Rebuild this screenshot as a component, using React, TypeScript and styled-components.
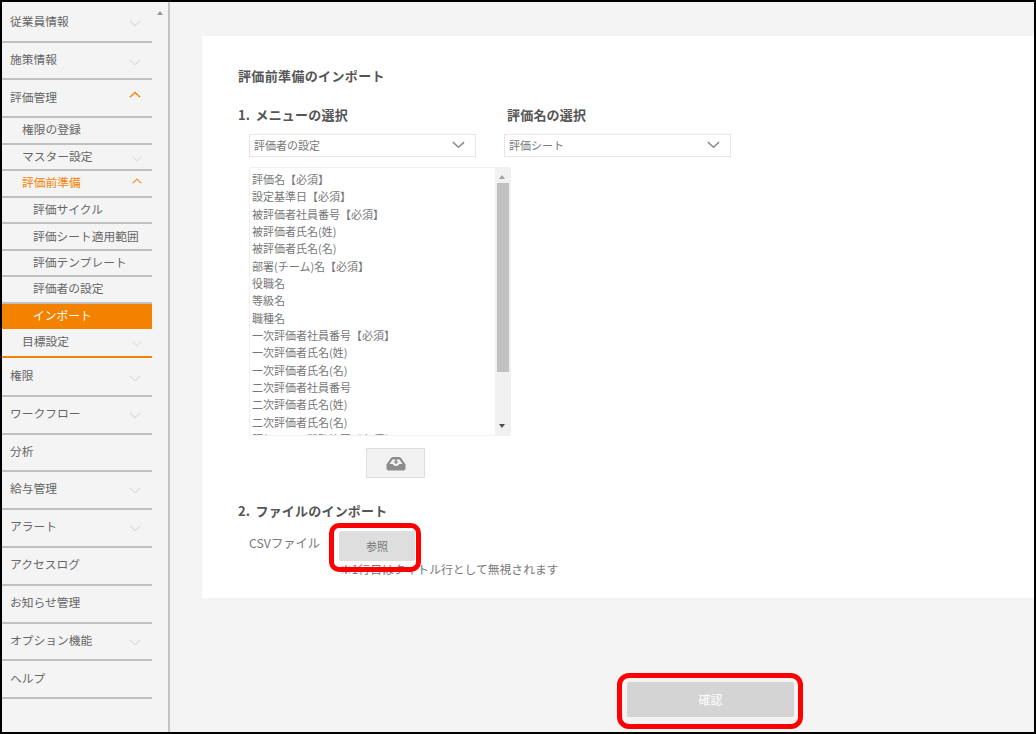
import React from 'react';
import styled, { createGlobalStyle } from 'styled-components';

const GlobalStyle = createGlobalStyle`
  html, body {
    margin: 0;
    padding: 0;
    background: #f4f4f4;
  }
  * {
    box-sizing: border-box;
  }
`;

const Frame = styled.div`
  position: relative;
  width: 1036px;
  height: 734px;
  overflow: hidden;
  display: flex;
  background: #f4f4f4;
  border: 2px solid #000;
  font-family: "Noto Sans CJK JP", "Noto Sans", sans-serif;
  font-size: 11.75px;
  color: #666;
`;

const Sidebar = styled.nav`
  position: relative;
  flex: none;
  width: 168px;
  height: 100%;
  border-right: 2px solid #c4c4c4;
`;

const Menu = styled.ul`
  list-style: none;
  margin: 0;
  padding: 0;
  width: 150px;
`;

const Row = styled.li<{ $h: number; $indent: number; $pb: number; $active?: boolean; $open?: boolean; $line?: string }>`
  height: ${({ $h }) => $h}px;
  display: flex;
  align-items: center;
  justify-content: space-between;
  padding: 0 ${({ $indent }) => ($indent > 9 ? 10 : 11)}px ${({ $pb }) => $pb}px ${({ $indent }) => $indent}px;
  border-bottom: 2px solid ${({ $line }) => $line || '#c0c0c0'};
  background: ${({ $active }) => ($active ? '#f38200' : 'transparent')};
  color: ${({ $active, $open }) => ($active ? '#fff' : $open ? '#f38200' : '#666')};
  white-space: nowrap;
`;

const ScrollUp = styled.span`
  position: absolute;
  top: 9px;
  left: 155px;
  width: 0;
  height: 0;
  border-left: 3px solid transparent;
  border-right: 3px solid transparent;
  border-bottom: 4px solid #999;
`;

const Main = styled.main`
  flex: 1;
  min-width: 0;
  padding-top: 34px;
  padding-left: 32px;
`;

const Card = styled.section`
  background: #fff;
  height: 562px;
  padding: 31px 0 0 36px;
`;

const Title = styled.h1`
  margin: 0 0 21px;
  font-size: 13px;
  line-height: 18px;
  font-weight: 700;
  color: #555;
  letter-spacing: 0.35px;
`;

const SelectRow = styled.div`
  display: flex;
`;

const Column = styled.div<{ $w: number }>`
  width: ${({ $w }) => $w}px;
`;

const StepTitle = styled.h2`
  margin: 0;
  font-size: 13px;
  line-height: 18px;
  font-weight: 700;
  color: #555;
  letter-spacing: 0.2px;
  word-spacing: 2px;
`;

const Select = styled.div<{ $ml: number }>`
  margin: 10px 0 0 ${({ $ml }) => $ml}px;
  width: 227px;
  height: 23px;
  display: flex;
  align-items: center;
  justify-content: space-between;
  padding: 0 10px 2px 4px;
  background: #fff;
  border: 1px solid #e6e6e6;
  font-size: 11px;
  color: #777;
`;

const ListBox = styled.div`
  position: relative;
  margin: 10px 0 0 11px;
  width: 262px;
  height: 269px;
  padding: 3px 0 0 2px;
  overflow: hidden;
  background: #fff;
  border: 1px solid #f0f0f0;
  border-radius: 2px;
`;

const ListItem = styled.div`
  height: 17.35px;
  line-height: 17.35px;
  font-size: 11px;
  color: #777;
  white-space: nowrap;
`;

const ScrollTrack = styled.div`
  position: absolute;
  top: 0;
  right: 0;
  bottom: 0;
  width: 15px;
  background: #f1f1f1;
`;

const ScrollThumb = styled.div`
  position: absolute;
  top: 15px;
  left: 2px;
  right: 1px;
  height: 189px;
  background: #c1c1c1;
`;

const ArrowUp = styled.span`
  position: absolute;
  top: 7px;
  left: 4px;
  border-left: 3.5px solid transparent;
  border-right: 3.5px solid transparent;
  border-bottom: 4px solid #a3a3a3;
`;

const ArrowDown = styled.span`
  position: absolute;
  bottom: 7px;
  left: 4px;
  border-left: 3.5px solid transparent;
  border-right: 3.5px solid transparent;
  border-top: 4px solid #505050;
`;

const DownloadButton = styled.button`
  display: flex;
  align-items: center;
  justify-content: center;
  margin: 12px 0 0 128px;
  width: 59px;
  height: 30px;
  padding: 0;
  background: #f2f2f2;
  border: 1px solid #dedede;
`;

const ImportTitle = styled(StepTitle)`
  margin-top: 24px;
`;

const FileRow = styled.div`
  display: flex;
  align-items: center;
  margin: 11px 0 0 11px;
`;

const FileLabel = styled.span`
  width: 90px;
  padding-bottom: 6px;
  font-size: 12.3px;
  color: #777;
`;

const BrowseButton = styled.button`
  width: 76px;
  height: 30px;
  padding: 0;
  background: #dedede;
  border: none;
  border-radius: 2px;
  font: inherit;
  font-size: 11px;
  color: #777;
`;

const Note = styled.p`
  margin: 1px 0 0 102px;
  font-size: 11.8px;
  line-height: 14px;
  color: #777;
`;

const Submit = styled.button`
  position: absolute;
  left: 625px;
  top: 680px;
  width: 167px;
  height: 35px;
  padding: 0;
  background: #d4d4d4;
  border: none;
  border-radius: 2px;
  font: inherit;
  font-size: 12px;
  font-weight: 500;
  color: #f8f8f8;
`;

const Highlight = styled.div<{ $x: number; $y: number; $w: number; $h: number; $r: number }>`
  position: absolute;
  left: ${({ $x }) => $x}px;
  top: ${({ $y }) => $y}px;
  width: ${({ $w }) => $w}px;
  height: ${({ $h }) => $h}px;
  border: 5px solid #ff0000;
  border-radius: ${({ $r }) => $r}px;
`;

const ChevronSvg = styled.svg<{ $offset: number }>`
  flex: none;
  margin-top: ${({ $offset }) => $offset}px;
`;

const Chevron = ({ up, color, size = 12, offset = 0 }: { up?: boolean; color: string; size?: number; offset?: number }) => (
  <ChevronSvg $offset={offset} width={size} height={size * 0.6} viewBox="0 0 14 8" fill="none">
    <path d={up ? 'M1 7 L7 1.5 L13 7' : 'M1 1 L7 6.5 L13 1'} stroke={color} strokeWidth="1.5" />
  </ChevronSvg>
);

const InboxIcon = () => (
  <svg width="20" height="15" viewBox="0 0 20 15">
    <path
      fill="#8c8c8c"
      d="M0.5 8.5 L4.5 2.5 Q5.5 1 7 1 H13 Q14.5 1 15.5 2.5 L19.5 8.5 V12.5 Q19.5 14.5 17.5 14.5 H2.5 Q0.5 14.5 0.5 12.5 Z"
    />
    <path fill="#f2f2f2" d="M3.5 8 L6.5 3.5 H13.5 L16.5 8 H13.2 Q12.7 10 10 10 Q7.3 10 6.8 8 Z" />
    <path fill="#8c8c8c" d="M9.2 3 H10.8 V5.5 H12.5 L10 8.3 L7.5 5.5 H9.2 Z" />
  </svg>
);

type Item = {
  label: string;
  h: number;
  indent: number;
  pb: number;
  chevron?: 'up' | 'down';
  active?: boolean;
  open?: boolean;
  line?: string;
};

const menu: Item[] = [
  { label: '従業員情報', h: 41, indent: 8, pb: 3, chevron: 'down' },
  { label: '施策情報', h: 37, indent: 8, pb: 4, chevron: 'down' },
  { label: '評価管理', h: 38, indent: 8, pb: 4, chevron: 'up' },
  { label: '権限の登録', h: 27, indent: 20, pb: 5 },
  { label: 'マスター設定', h: 26, indent: 20, pb: 4, chevron: 'down' },
  { label: '評価前準備', h: 27, indent: 20, pb: 4, chevron: 'up', open: true },
  { label: '評価サイクル', h: 26, indent: 31, pb: 4 },
  { label: '評価シート適用範囲', h: 27, indent: 31, pb: 3 },
  { label: '評価テンプレート', h: 26, indent: 31, pb: 3 },
  { label: '評価者の設定', h: 27, indent: 31, pb: 5 },
  { label: 'インポート', h: 25, indent: 31, pb: 3, active: true, line: '#f38200' },
  { label: '目標設定', h: 29, indent: 20, pb: 5, chevron: 'down', line: '#f38200' },
  { label: '権限', h: 39, indent: 8, pb: 4, chevron: 'down' },
  { label: 'ワークフロー', h: 38, indent: 8, pb: 6, chevron: 'down' },
  { label: '分析', h: 37, indent: 8, pb: 5 },
  { label: '給与管理', h: 38, indent: 8, pb: 6, chevron: 'down' },
  { label: 'アラート', h: 38, indent: 8, pb: 6, chevron: 'down' },
  { label: 'アクセスログ', h: 38, indent: 8, pb: 6 },
  { label: 'お知らせ管理', h: 38, indent: 8, pb: 6 },
  { label: 'オプション機能', h: 37, indent: 8, pb: 5, chevron: 'down' },
  { label: 'ヘルプ', h: 38, indent: 8, pb: 4 },
];

const fields = [
  '評価名【必須】',
  '設定基準日【必須】',
  '被評価者社員番号【必須】',
  '被評価者氏名(姓)',
  '被評価者氏名(名)',
  '部署(チーム)名【必須】',
  '役職名',
  '等級名',
  '職種名',
  '一次評価者社員番号【必須】',
  '一次評価者氏名(姓)',
  '一次評価者氏名(名)',
  '二次評価者社員番号',
  '二次評価者氏名(姓)',
  '二次評価者氏名(名)',
  '評価シート閲覧範囲【必須】',
];

export default function App() {
  return (
    <>
      <GlobalStyle />
      <Frame>
        <Sidebar>
          <ScrollUp />
          <Menu>
            {menu.map((item) => (
              <Row
                key={item.label}
                $h={item.h}
                $indent={item.indent}
                $pb={item.pb}
                $active={item.active}
                $open={item.open}
                $line={item.line}
              >
                {item.label}
                {item.chevron === 'up' && (
                  <Chevron up color="#f38200" size={item.indent > 9 ? 10 : 12} offset={-2} />
                )}
                {item.chevron === 'down' && (
                  <Chevron color="#dcdcdc" size={item.indent > 9 ? 10 : 12} offset={8} />
                )}
              </Row>
            ))}
          </Menu>
        </Sidebar>
        <Main>
          <Card>
            <Title>評価前準備のインポート</Title>
            <SelectRow>
              <Column $w={269}>
                <StepTitle>1. メニューの選択</StepTitle>
                <Select $ml={11}>
                  評価者の設定
                  <Chevron color="#888" size={13} />
                </Select>
              </Column>
              <Column $w={240}>
                <StepTitle>評価名の選択</StepTitle>
                <Select $ml={-3}>
                  評価シート
                  <Chevron color="#888" size={13} />
                </Select>
              </Column>
            </SelectRow>
            <ListBox>
              {fields.map((field) => (
                <ListItem key={field}>{field}</ListItem>
              ))}
              <ScrollTrack>
                <ArrowUp />
                <ScrollThumb />
                <ArrowDown />
              </ScrollTrack>
            </ListBox>
            <DownloadButton aria-label="download">
              <InboxIcon />
            </DownloadButton>
            <ImportTitle>2. ファイルのインポート</ImportTitle>
            <FileRow>
              <FileLabel>CSVファイル</FileLabel>
              <BrowseButton>参照</BrowseButton>
            </FileRow>
            <Note>※1行目はタイトル行として無視されます</Note>
          </Card>
        </Main>
        <Submit>確認</Submit>
        <Highlight $x={327} $y={521} $w={92} $h={49} $r={10} />
        <Highlight $x={615} $y={671} $w={186} $h={56} $r={12} />
      </Frame>
    </>
  );
}
